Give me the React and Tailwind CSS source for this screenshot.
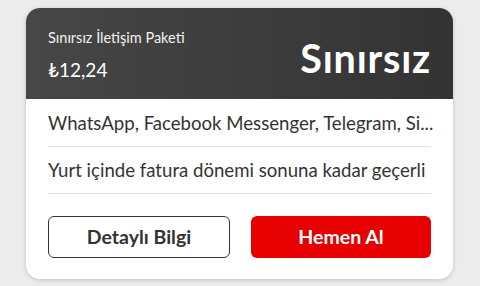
import React from 'react';

function PackageCard() {
  return (
    <div className="w-[427px] rounded-[14px] bg-white shadow-[0_1px_4px_rgba(0,0,0,0.18)] overflow-hidden">
      <div className="h-[91px] bg-gradient-to-r from-[#474747] to-[#333333] flex items-center justify-between pl-[22px] pr-[22px]">
        <div className="flex flex-col">
          <p className="text-[14.5px] leading-[18px] text-[#f2f2f2] mt-[4px]">Sınırsız İletişim Paketi</p>
          <p className="text-[19px] leading-[24px] text-white mt-[11px]">₺12,24</p>
        </div>
        <p className="text-[39.5px] font-bold text-white leading-none tracking-[0.8px] mt-[8px]">Sınırsız</p>
      </div>
      <div className="px-[22px]">
        <div className="h-[48px] flex items-center border-b border-[#e2e2e2]">
          <p className="text-[18.6px] text-[#333] whitespace-nowrap pt-[2px]">WhatsApp, Facebook Messenger, Telegram, Si...</p>
        </div>
        <div className="h-[47px] flex items-center border-b border-[#e2e2e2]">
          <p className="text-[18.6px] text-[#333] whitespace-nowrap pt-[2px]">Yurt içinde fatura dönemi sonuna kadar geçerli</p>
        </div>
        <div className="flex gap-[21px] pt-[22px] pb-[21px]">
          <button className="flex-1 h-[42px] rounded-[6px] border border-[#333] bg-white text-[19.5px] font-bold text-[#333]">
            Detaylı Bilgi
          </button>
          <button className="flex-1 h-[42px] rounded-[6px] bg-[#e60000] text-[19.5px] font-bold text-white">
            Hemen Al
          </button>
        </div>
      </div>
    </div>
  );
}

export default function App() {
  return (
    <div className="w-[480px] h-[286px] bg-[#ececec] pt-[8px] pl-[26px] font-['Lato',sans-serif]">
      <PackageCard />
    </div>
  );
}
